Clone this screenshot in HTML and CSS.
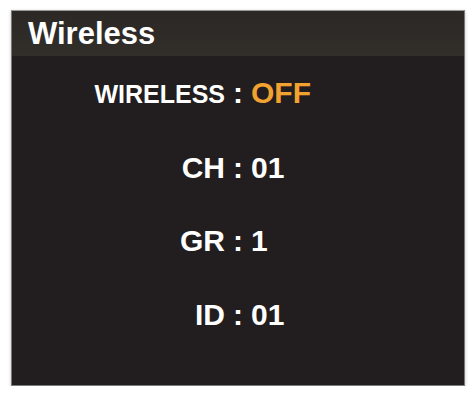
FILE: index.html
```html
<!DOCTYPE html>
<html>
<head>
<meta charset="utf-8">
<link rel="stylesheet" href="styles.css">
</head>
<body>
<div class="panel">
  <div class="panel-header">Wireless</div>
  <div class="panel-body">
    <div class="row">
      <span class="label small">WIRELESS</span>
      <span class="colon">:</span>
      <span class="value off">OFF</span>
    </div>
    <div class="row">
      <span class="label">CH</span>
      <span class="colon">:</span>
      <span class="value">01</span>
    </div>
    <div class="row">
      <span class="label">GR</span>
      <span class="colon">:</span>
      <span class="value">1</span>
    </div>
    <div class="row">
      <span class="label">ID</span>
      <span class="colon">:</span>
      <span class="value">01</span>
    </div>
  </div>
</div>
</body>
</html>
```
FILE: styles.css
```css
html, body {
  margin: 0;
  background: #ffffff;
}
body {
  padding: 10px 9px 0 11px;
  font-family: "Liberation Sans", Arial, sans-serif;
  font-weight: bold;
  color: #ffffff;
}
.panel {
  height: 376px;
  box-sizing: border-box;
  border: 1px solid #7a7a7a;
  border-top-color: #9a9a9a;
  background: #221d1e;
  box-shadow: 0 1px 3px rgba(0, 0, 0, 0.25);
  display: flex;
  flex-direction: column;
}
.panel-header {
  height: 45px;
  line-height: 45px;
  font-size: 31px;
  padding-left: 16px;
  background: linear-gradient(#2b2825, #322e2a);
}
.panel-body {
  flex: 1;
  padding-top: 22px;
  display: flex;
  flex-direction: column;
  gap: 43.7px;
}
.row {
  display: grid;
  grid-template-columns: 1fr auto 1fr;
  column-gap: 8px;
  align-items: baseline;
  font-size: 30px;
  line-height: 30px;
}
.label {
  justify-self: end;
}
.label.small {
  font-size: 25px;
}
.value {
  justify-self: start;
}
.off {
  color: #f2a230;
}
```
